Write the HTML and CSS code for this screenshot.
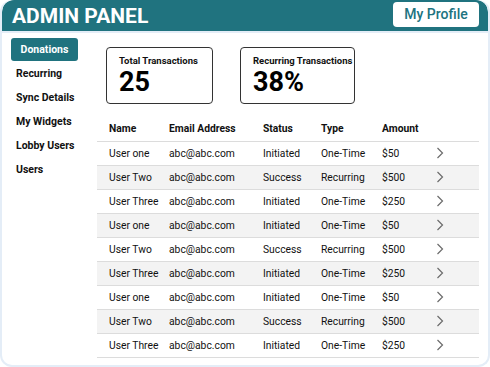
FILE: index.html
```html
<!DOCTYPE html>
<html lang="en">
<head>
    <meta charset="UTF-8">
    <meta name="viewport" content="width=device-width, initial-scale=1.0">
    <title>Admin Panel</title>
    <link rel="stylesheet" href="styles.css">
</head>
<body>
    <div class="panel">
        <div class="header">
            <h1>ADMIN PANEL</h1>
            <button class="profile-btn">My Profile</button>
        </div>

        <div class="body">
            <ul class="sidebar">
                <li class="active">Donations</li>
                <li>Recurring</li>
                <li>Sync Details</li>
                <li>My Widgets</li>
                <li>Lobby Users</li>
                <li>Users</li>
            </ul>

            <div class="main">
                <div class="stats">
                    <div class="stat-card">
                        <div class="stat-title">Total Transactions</div>
                        <div class="stat-value">25</div>
                    </div>
                    <div class="stat-card">
                        <div class="stat-title">Recurring Transactions</div>
                        <div class="stat-value">38%</div>
                    </div>
                </div>

                <table class="donations">
                    <thead>
                        <tr>
                            <th class="col-name">Name</th>
                            <th class="col-email">Email Address</th>
                            <th class="col-status">Status</th>
                            <th class="col-type">Type</th>
                            <th class="col-amount">Amount</th>
                            <th></th>
                        </tr>
                    </thead>
                    <tbody id="rows"></tbody>
                </table>
            </div>
        </div>
    </div>

    <script>
        const rows = [
            ["User one", "abc@abc.com", "Initiated", "One-Time", "$50"],
            ["User Two", "abc@abc.com", "Success", "Recurring", "$500"],
            ["User Three", "abc@abc.com", "Initiated", "One-Time", "$250"],
            ["User one", "abc@abc.com", "Initiated", "One-Time", "$50"],
            ["User Two", "abc@abc.com", "Success", "Recurring", "$500"],
            ["User Three", "abc@abc.com", "Initiated", "One-Time", "$250"],
            ["User one", "abc@abc.com", "Initiated", "One-Time", "$50"],
            ["User Two", "abc@abc.com", "Success", "Recurring", "$500"],
            ["User Three", "abc@abc.com", "Initiated", "One-Time", "$250"]
        ];

        const chevron = '<svg width="8" height="12" viewBox="0 0 8 12"><path d="M1.5 1 L6.5 6 L1.5 11" fill="none" stroke="#6b6b6b" stroke-width="1.2"/></svg>';

        document.getElementById('rows').innerHTML = rows.map(r => `
            <tr>
                ${r.map(c => `<td>${c}</td>`).join('')}
                <td class="arrow">${chevron}</td>
            </tr>
        `).join('');
    </script>
</body>
</html>
```

FILE: styles.css
```css
:root {
    --teal: #20737f;
    --edge: #e4edf7;
    --text-dark: #111;
    --row-line: #dcdcdc;
    --row-alt: #f3f3f3;
}

* {
    margin: 0;
    padding: 0;
    box-sizing: border-box;
    font-family: Roboto, 'Noto Sans', sans-serif;
}

body {
    background: #fff;
    width: 490px;
    height: 367px;
    overflow: hidden;
}

.panel {
    width: 490px;
    height: 367px;
    border: 2px solid var(--edge);
    border-top: none;
    border-radius: 12px;
    overflow: hidden;
}

.header {
    background: var(--teal);
    height: 33px;
    border-bottom: 2px solid var(--edge);
    display: flex;
    align-items: center;
    justify-content: space-between;
    padding: 0 9px 0 10px;
    border-radius: 12px 12px 0 0;
}

.header h1 {
    color: #fff;
    font-size: 21px;
    font-weight: 700;
}

.profile-btn {
    background: #fff;
    color: var(--teal);
    border: none;
    border-radius: 4px;
    width: 86px;
    height: 25px;
    font-size: 14px;
    font-weight: 500;
    margin-top: -3px;
}

.body {
    display: flex;
    padding: 5px 0 0 9px;
}

.sidebar {
    list-style: none;
    width: 86px;
    flex-shrink: 0;
}

.sidebar li {
    font-size: 10.5px;
    font-weight: 700;
    color: var(--text-dark);
    height: 24px;
    line-height: 24px;
    padding-left: 5px;
}

.sidebar li.active {
    background: var(--teal);
    color: #fff;
    width: 67px;
    height: 23px;
    line-height: 23px;
    border-radius: 3px;
    text-align: center;
    padding: 0;
    margin-bottom: 1px;
}

.main {
    flex: 1;
    padding-right: 10px;
}

.stats {
    display: flex;
    gap: 27px;
    padding: 9px 0 0 9px;
}

.stat-card {
    border: 1px solid #333;
    border-radius: 4px;
    height: 57px;
    padding: 6px 0 0 12px;
    white-space: nowrap;
}

.stat-card:first-child {
    width: 107px;
}

.stat-card:last-child {
    width: 115px;
}

.stat-title {
    font-size: 9.5px;
    font-weight: 700;
    color: var(--text-dark);
    line-height: 13px;
}

.stat-value {
    font-size: 27px;
    font-weight: 700;
    color: #000;
    line-height: 30px;
}

.donations {
    width: 382px;
    border-collapse: collapse;
    margin-top: 13px;
    font-size: 10.3px;
    color: var(--text-dark);
}

.donations th {
    text-align: left;
    font-weight: 700;
    height: 24px;
    padding-bottom: 1px;
}

.donations td {
    height: 24px;
    border-top: 1px solid var(--row-line);
}

.donations tbody tr:last-child td {
    border-bottom: 1px solid var(--row-line);
}

.donations tbody tr:nth-child(even) {
    background: var(--row-alt);
}

.donations th:first-child,
.donations td:first-child {
    padding-left: 12px;
}

.col-name { width: 72px; }
.col-email { width: 94px; }
.col-status { width: 58px; }
.col-type { width: 61px; }
.col-amount { width: 54px; }

.arrow svg {
    display: block;
}
```
